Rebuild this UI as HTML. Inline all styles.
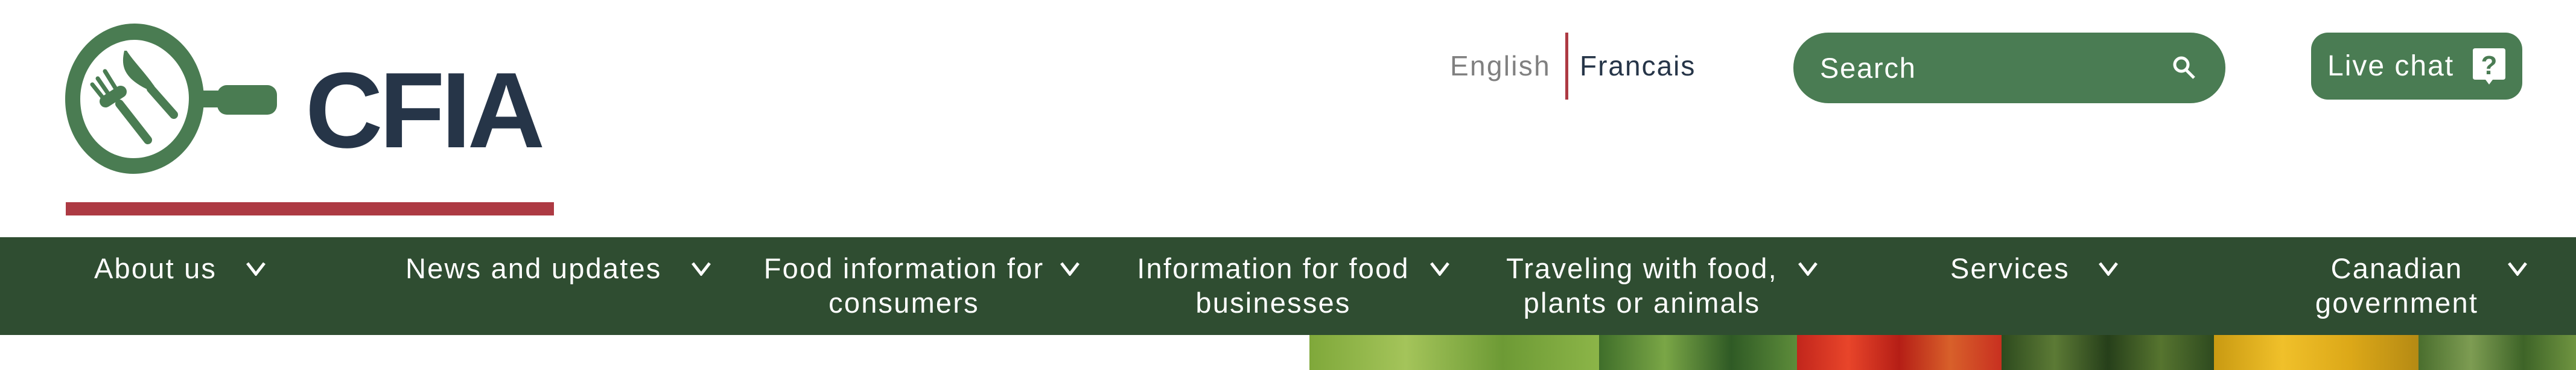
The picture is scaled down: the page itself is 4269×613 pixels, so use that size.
<!DOCTYPE html>
<html><head><meta charset="utf-8"><style>
*{margin:0;padding:0;box-sizing:border-box}
body{width:4269px;height:613px;position:relative;overflow:hidden;background:#fff;font-family:"Liberation Sans",sans-serif}
.a{position:absolute;white-space:nowrap}
.nav{position:absolute;left:0;top:393px;width:4269px;height:162px;background:#2f4d31}
.n{position:absolute;color:#fff;font-size:47px;letter-spacing:2.2px;line-height:57px;text-align:center;top:416px}
.ch{position:absolute;top:433px;width:34px;height:24px}
.veg{position:absolute;top:555px;height:58px}
</style></head><body>
<svg class="a" style="left:0;top:0" width="480" height="300" viewBox="0 0 480 300">
<g fill="#4a7c52">
<path fill-rule="evenodd" d="M223,39 C286,39 338,95 338,164 C338,233 286,288 221,288 C158,288 108,233 108,164 C108,95 160,39 223,39 Z M223,66 C270,66 313,112 313,162 C313,220 272,262 221,262 C173,262 133,220 133,164 C133,110 175,66 223,66 Z"/>
<rect x="333" y="150" width="30" height="28"/>
<rect x="360" y="141" width="99" height="49" rx="16"/>
<path d="M206,84 C200,110 205,130 248,150 L256,143 C240,120 220,100 210,84 Z"/>
</g>
<g stroke="#4a7c52" stroke-linecap="round" fill="none">
<line x1="250" y1="147" x2="288" y2="190" stroke-width="14"/>
<line x1="198" y1="172" x2="245" y2="232" stroke-width="14"/>
<line x1="153" y1="140" x2="177" y2="170" stroke-width="7"/>
<line x1="162" y1="130" x2="184" y2="162" stroke-width="7"/>
<line x1="174" y1="118" x2="195" y2="152" stroke-width="7"/>
<line x1="175" y1="168" x2="200" y2="152" stroke-width="20"/>
</g>
</svg>
<div class="a" style="left:506px;top:94px;font-size:178px;font-weight:bold;color:#263548;letter-spacing:-6px;line-height:178px">CFIA</div>
<div class="a" style="left:109px;top:335px;width:809px;height:22px;background:#ad3a43"></div>

<div class="a" style="left:2403px;top:82px;font-size:46px;letter-spacing:2.3px;color:#808080">English</div>
<div class="a" style="left:2594px;top:54px;width:5px;height:111px;background:#ad3a43"></div>
<div class="a" style="left:2618px;top:82px;font-size:46px;letter-spacing:2px;color:#263548">Francais</div>

<div class="a" style="left:2972px;top:54px;width:716px;height:117px;border-radius:58px;background:#4a7c53"></div>
<div class="a" style="left:3016px;top:85px;font-size:47px;letter-spacing:1.8px;color:#fff">Search</div>
<svg class="a" style="left:3598px;top:91px" width="44" height="42" viewBox="0 0 44 42"><circle cx="17" cy="16" r="11" fill="none" stroke="#fff" stroke-width="5"/><line x1="25" y1="25" x2="38" y2="38" stroke="#fff" stroke-width="5"/></svg>

<div class="a" style="left:3830px;top:54px;width:350px;height:111px;border-radius:28px;background:#4a7c53"></div>
<div class="a" style="left:3857px;top:82px;font-size:48px;letter-spacing:2px;color:#fff">Live chat</div>
<svg class="a" style="left:4096px;top:78px" width="58" height="64" viewBox="0 0 58 64"><path d="M6,2 H52 Q56,2 56,6 V50 Q56,54 52,54 H35 L29,62 L23,54 H6 Q2,54 2,50 V6 Q2,2 6,2 Z" fill="#fff"/><text x="29" y="45" text-anchor="middle" font-size="44" font-weight="bold" fill="#4a7c53" font-family="Liberation Sans">?</text></svg>

<div class="nav"></div>
<div class="n" style="left:156px">About us</div>
<div class="n" style="left:672px">News and updates</div>
<div class="n" style="left:1241px;width:514px">Food information for<br>consumers</div>
<div class="n" style="left:1859px;width:502px">Information for food<br>businesses</div>
<div class="n" style="left:2471px;width:500px">Traveling with food,<br>plants or animals</div>
<div class="n" style="left:3232px">Services</div>
<div class="n" style="left:3826px;width:292px">Canadian<br>government</div>
<svg width="0" height="0" style="position:absolute"><defs><path id="c" d="M3,3 L17,21 L31,3" fill="none" stroke="#fff" stroke-width="5"/></defs></svg>
<svg class="ch" style="left:407px" viewBox="0 0 34 24"><use href="#c"/></svg>
<svg class="ch" style="left:1145px" viewBox="0 0 34 24"><use href="#c"/></svg>
<svg class="ch" style="left:1756px" viewBox="0 0 34 24"><use href="#c"/></svg>
<svg class="ch" style="left:2369px" viewBox="0 0 34 24"><use href="#c"/></svg>
<svg class="ch" style="left:2979px" viewBox="0 0 34 24"><use href="#c"/></svg>
<svg class="ch" style="left:3477px" viewBox="0 0 34 24"><use href="#c"/></svg>
<svg class="ch" style="left:4155px" viewBox="0 0 34 24"><use href="#c"/></svg>

<div class="veg" style="left:2170px;width:480px;background:linear-gradient(90deg,#7fa83a,#a4c45a,#6d9a35,#8cb548)"></div>
<div class="veg" style="left:2650px;width:328px;background:linear-gradient(90deg,#3f6e2a,#7aa646,#2f5a25,#5d8c3a)"></div>
<div class="veg" style="left:2978px;width:339px;background:linear-gradient(90deg,#c2261c,#e8452a,#b51e16,#d8602a,#c83020)"></div>
<div class="veg" style="left:3317px;width:352px;background:linear-gradient(90deg,#2d4a1e,#5c7a35,#263f1a,#56742f,#2e4a1f)"></div>
<div class="veg" style="left:3669px;width:339px;background:linear-gradient(90deg,#c99a12,#f0c02a,#dca818,#b58a14)"></div>
<div class="veg" style="left:4008px;width:261px;background:linear-gradient(90deg,#4a6e2e,#7d9c52,#3e6428,#6f9440)"></div>
</body></html>
